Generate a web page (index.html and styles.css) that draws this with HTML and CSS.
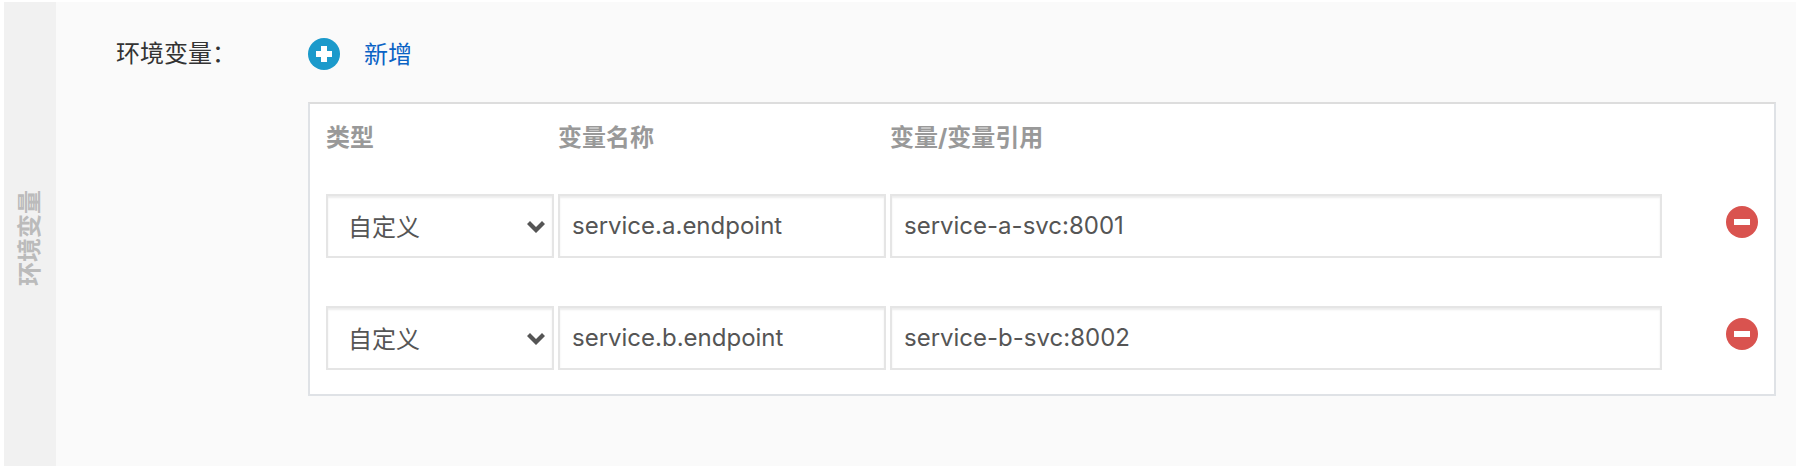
FILE: index.html
```html
<!DOCTYPE html>
<html lang="zh-CN">
<head>
  <meta charset="UTF-8">
  <meta name="viewport" content="width=device-width, initial-scale=1.0">
  <title>环境变量</title>
  <link rel="stylesheet" href="styles.css">
</head>
<body>
  <section class="panel">
    <!-- 左侧标题 -->
    <div class="panel-side">
      <span class="side-title">环境变量</span>
    </div>

    <form class="panel-body">
      <div class="form-label">环境变量：</div>

      <div class="form-content">
        <!-- 新增按钮 -->
        <button type="button" class="add-btn">
          <svg class="icon" viewBox="0 0 32 32" aria-hidden="true">
            <circle cx="16" cy="16" r="16" fill="#1b9acb"/>
            <path d="M13 8h6v5h5v6h-5v5h-6v-5H8v-6h5z" fill="#fff"/>
          </svg>
          <span class="add-text">新增</span>
        </button>

        <!-- 变量列表 -->
        <div class="table-box">
          <table class="env-table">
            <colgroup>
              <col class="col-type">
              <col class="col-name">
              <col>
              <col class="col-action">
            </colgroup>
            <thead>
              <tr>
                <th id="thType">类型</th>
                <th id="thName">变量名称</th>
                <th id="thValue">变量/变量引用</th>
                <td></td>
              </tr>
            </thead>
            <tbody>
              <tr>
                <td>
                  <div class="select-wrap">
                    <select name="type1" class="field" aria-labelledby="thType">
                      <option>自定义</option>
                    </select>
                    <svg class="arrow" viewBox="0 0 18 12" aria-hidden="true">
                      <path d="M0 3l3-3 6 6 6-6 3 3-9 9z" fill="#555"/>
                    </svg>
                  </div>
                </td>
                <td><input type="text" name="name1" class="field" value="service.a.endpoint" aria-labelledby="thName"></td>
                <td><input type="text" name="value1" class="field" value="service-a-svc:8001" aria-labelledby="thValue"></td>
                <td class="action">
                  <button type="button" class="remove-btn" aria-label="删除">
                    <svg class="icon" viewBox="0 0 32 32" aria-hidden="true">
                      <circle cx="16" cy="16" r="16" fill="#d9534f"/>
                      <path d="M8 13h16v6H8z" fill="#fff"/>
                    </svg>
                  </button>
                </td>
              </tr>
              <tr>
                <td>
                  <div class="select-wrap">
                    <select name="type2" class="field" aria-labelledby="thType">
                      <option>自定义</option>
                    </select>
                    <svg class="arrow" viewBox="0 0 18 12" aria-hidden="true">
                      <path d="M0 3l3-3 6 6 6-6 3 3-9 9z" fill="#555"/>
                    </svg>
                  </div>
                </td>
                <td><input type="text" name="name2" class="field" value="service.b.endpoint" aria-labelledby="thName"></td>
                <td><input type="text" name="value2" class="field" value="service-b-svc:8002" aria-labelledby="thValue"></td>
                <td class="action">
                  <button type="button" class="remove-btn" aria-label="删除">
                    <svg class="icon" viewBox="0 0 32 32" aria-hidden="true">
                      <circle cx="16" cy="16" r="16" fill="#d9534f"/>
                      <path d="M8 13h16v6H8z" fill="#fff"/>
                    </svg>
                  </button>
                </td>
              </tr>
            </tbody>
          </table>
        </div>
      </div>
    </form>
  </section>
</body>
</html>
```
FILE: styles.css
```css
* {
  box-sizing: border-box;
}

body {
  margin: 0;
  padding: 2px 16px 2px 4px;
  background: #fff;
  color: #333;
  font-family: Inter, "Noto Sans CJK SC", sans-serif;
  font-size: 24px;
  line-height: 32px;
}

button,
input,
select {
  font: inherit;
}

.panel {
  display: flex;
  background: #fafafa;
}

/* 左侧标题 */
.panel-side {
  display: flex;
  align-items: center;
  justify-content: center;
  width: 52px;
  padding-top: 8px;
  background: #f1f1f1;
}

.side-title {
  writing-mode: vertical-rl;
  text-orientation: sideways;
  transform: rotate(180deg);
  color: #bbb;
  font-weight: bold;
}

/* 表单 */
.panel-body {
  display: flex;
  flex: 1;
  padding: 36px 20px 70px 60px;
}

.form-label {
  width: 192px;
}

.form-content {
  flex: 1;
  min-width: 0;
}

.icon {
  display: block;
  width: 32px;
  height: 32px;
}

.add-btn,
.remove-btn {
  padding: 0;
  border: 0;
  background: none;
  cursor: pointer;
}

.add-btn {
  display: flex;
  align-items: center;
  gap: 24px;
  color: #0b63c5;
}

.add-text {
  padding-top: 2px;
  line-height: 30px;
}

/* 变量列表 */
.table-box {
  margin-top: 32px;
  padding: 0 16px;
  border: 2px solid #dfe2e6;
  border-top-color: #ddd;
  background: #fff;
}

.env-table {
  width: 100%;
  table-layout: fixed;
  border-collapse: collapse;
}

.col-type {
  width: 232px;
}

.col-name {
  width: 332px;
}

.col-action {
  width: 92px;
}

.env-table th {
  height: 66px;
  padding: 2px 0 0;
  color: #999;
  font-weight: bold;
  text-align: left;
}

.env-table tbody td {
  padding: 24px 4px 24px 0;
}

.env-table tbody .action {
  padding: 36px 0 0;
  vertical-align: top;
}

.remove-btn {
  display: block;
  margin-left: auto;
}

.field {
  display: block;
  width: 100%;
  height: 64px;
  padding: 0 12px 2px;
  border: 2px solid #e5e5e5;
  border-radius: 0;
  background: #fff;
  box-shadow: inset 0 2px 2px rgba(0, 0, 0, 0.075);
  color: #555;
}

.select-wrap {
  position: relative;
}

.select-wrap .field {
  padding: 4px 40px 0 20px;
  appearance: none;
}

.arrow {
  position: absolute;
  top: 27px;
  right: 9px;
  width: 18px;
  height: 12px;
  pointer-events: none;
}
```
